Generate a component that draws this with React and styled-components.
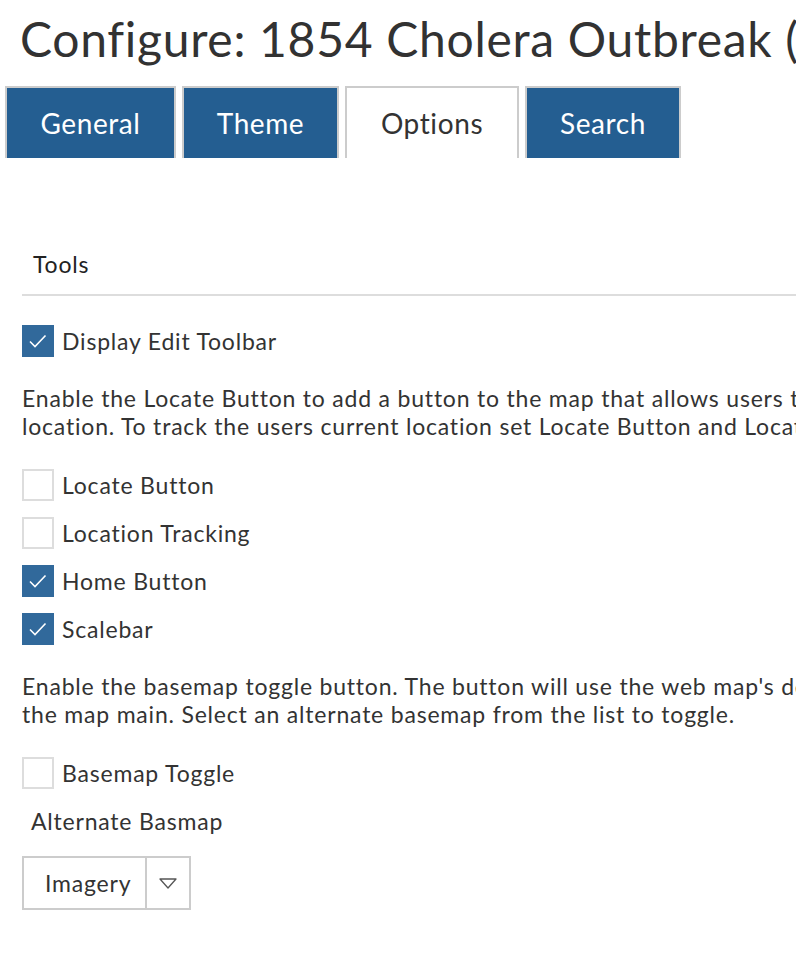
import React from "react"
import styled, { createGlobalStyle } from "styled-components"

const GlobalStyle = createGlobalStyle`
	html, body {
		margin: 0;
		padding: 0;
		background: #fff;
		overflow: hidden;
	}
	body {
		font-family: Lato, "Liberation Sans", sans-serif;
		color: #333;
	}
`

const Page = styled.div`
	width: 1200px;
	height: 968px;
`

const Title = styled.h1`
	margin: 12px 0 0 20px;
	font-size: 48px;
	line-height: 53px;
	font-weight: 400;
	letter-spacing: 0.7px;
	color: #323232;
	white-space: nowrap;
`

const Tabs = styled.div`
	display: flex;
	gap: 6px;
	margin: 21px 0 0 5px;
`

const Tab = styled.div`
	height: 72px;
	width: ${(p) => p.$w}px;
	box-sizing: border-box;
	display: flex;
	align-items: center;
	justify-content: center;
	border: 2px solid #cccccc;
	border-bottom: none;
	font-size: 28px;
	letter-spacing: 0.6px;
	color: ${(p) => (p.$active ? "#333" : "#fff")};
	background: ${(p) => (p.$active ? "#fff" : "#245e91")};
`

const Section = styled.div`
	padding: 90px 0 0 22px;
	font-size: 23px;
	letter-spacing: 0.8px;
`

const SectionHeader = styled.div`
	line-height: 32px;
	color: #222;
	padding: 0 0 14px 11px;
	border-bottom: 2px solid #dddddd;
	margin-bottom: 29px;
`

const Row = styled.label`
	display: flex;
	align-items: center;
	gap: 8px;
	height: 32px;
	margin: 16px 0;
	&:first-of-type {
		margin-top: 0;
	}
`

const Box = styled.span`
	width: 32px;
	height: 32px;
	box-sizing: border-box;
	flex: none;
	display: flex;
	align-items: center;
	justify-content: center;
	background: ${(p) => (p.$checked ? "#31699b" : "#fff")};
	border: ${(p) => (p.$checked ? "none" : "2px solid #dddddd")};
`

const Help = styled.p`
	margin: 27px 0 29px;
	line-height: 28px;
	white-space: nowrap;
`

const FieldLabel = styled.div`
	margin: 18px 0 21px 9px;
	line-height: 28px;
`

const Select = styled.div`
	display: inline-flex;
	height: 54px;
	box-sizing: border-box;
	border: 2px solid #cccccc;
`

const SelectValue = styled.div`
	width: 123px;
	box-sizing: border-box;
	padding-left: 21px;
	display: flex;
	align-items: center;
	border-right: 2px solid #cccccc;
`

const SelectArrow = styled.div`
	width: 42px;
	display: flex;
	align-items: center;
	justify-content: center;
`

const Check = () => (
	<svg width="32" height="32" viewBox="0 0 32 32">
		<path d="M8 16.5 L13 21.5 L23.5 10.5" fill="none" stroke="#fff" strokeWidth="1.6" />
	</svg>
)

const Checkbox = ({ checked, children }) => (
	<Row>
		<Box $checked={checked}>{checked && <Check />}</Box>
		{children}
	</Row>
)

const tabs = [
	{ name: "General", w: 171 },
	{ name: "Theme", w: 157 },
	{ name: "Options", w: 174, active: true },
	{ name: "Search", w: 156 },
]

const App = () => {
	return (
		<>
			<GlobalStyle />
			<Page>
				<Title>Configure: 1854 Cholera Outbreak (Map)</Title>
				<Tabs>
					{tabs.map((t) => (
						<Tab key={t.name} $w={t.w} $active={t.active}>
							{t.name}
						</Tab>
					))}
				</Tabs>
				<Section>
					<SectionHeader>Tools</SectionHeader>
					<Checkbox checked>Display Edit Toolbar</Checkbox>
					<Help>
						Enable the Locate Button to add a button to the map that allows users to zoom to their
						<br />
						location. To track the users current location set Locate Button and Location Tracking to true.
					</Help>
					<Checkbox>Locate Button</Checkbox>
					<Checkbox>Location Tracking</Checkbox>
					<Checkbox checked>Home Button</Checkbox>
					<Checkbox checked>Scalebar</Checkbox>
					<Help>
						Enable the basemap toggle button. The button will use the web map's  default basemap as
						<br />
						the map main. Select an alternate basemap from the list to toggle.
					</Help>
					<Checkbox>Basemap Toggle</Checkbox>
					<FieldLabel>Alternate Basmap</FieldLabel>
					<Select>
						<SelectValue>Imagery</SelectValue>
						<SelectArrow>
							<svg width="18" height="11" viewBox="0 0 18 11">
								<path d="M1 1 L17 1 L9 10 Z" fill="none" stroke="#555" strokeWidth="1.3" strokeLinejoin="round" />
							</svg>
						</SelectArrow>
					</Select>
				</Section>
			</Page>
		</>
	)
}

export default App
